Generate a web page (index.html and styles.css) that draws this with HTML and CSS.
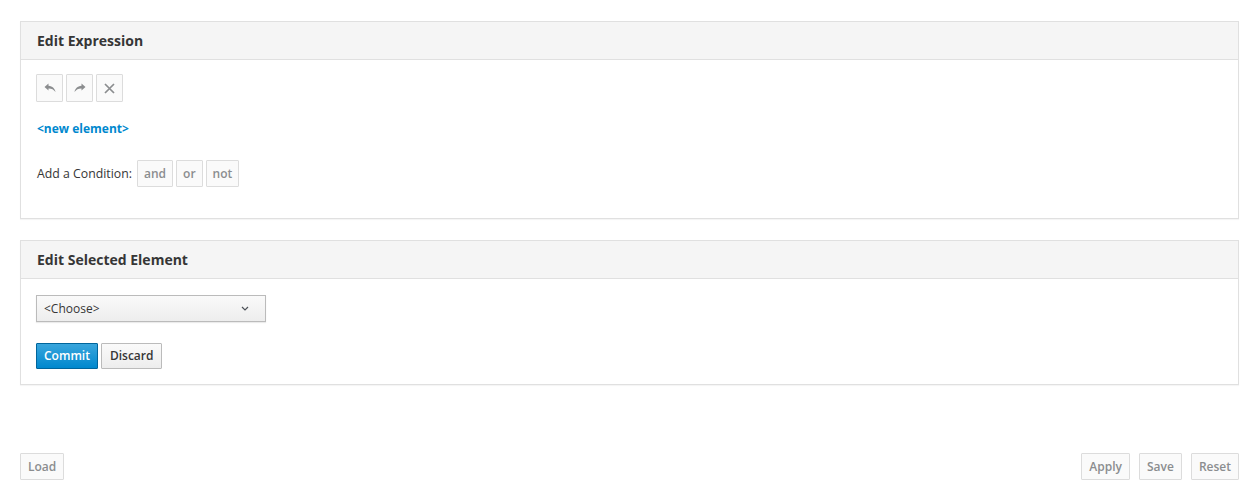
FILE: index.html
```html
<!DOCTYPE html>
<html lang="en">
<head>
    <meta charset="UTF-8">
    <meta name="viewport" content="width=device-width, initial-scale=1.0">
    <title>Edit Expression</title>
    <link rel="stylesheet" href="styles.css">
</head>
<body>
    <div class="page">
        <div class="panel">
            <div class="panel-heading">Edit Expression</div>
            <div class="panel-body expr-body">
                <div class="btn-group">
                    <button class="btn btn-icon" title="Undo">
                        <svg width="12" height="10" viewBox="0 0 12 10"><path d="M4.5 0.5 L0.5 4 L4.5 7.5 V5.4 C7.4 5.3 9.6 6.2 11.5 9 C11 5.6 8.6 3 4.5 2.7 Z" fill="#8b8d8f"/></svg>
                    </button>
                    <button class="btn btn-icon" title="Redo">
                        <svg width="12" height="10" viewBox="0 0 12 10"><path d="M7.5 0.5 L11.5 4 L7.5 7.5 V5.4 C4.6 5.3 2.4 6.2 0.5 9 C1 5.6 3.4 3 7.5 2.7 Z" fill="#8b8d8f"/></svg>
                    </button>
                    <button class="btn btn-icon" title="Clear">
                        <svg width="11" height="11" viewBox="0 0 11 11"><path d="M1 1 L10 10 M10 1 L1 10" stroke="#8b8d8f" stroke-width="1.7"/></svg>
                    </button>
                </div>
                <a class="new-element" href="#">&lt;new element&gt;</a>
                <div class="condition-row">
                    <span class="label">Add a Condition:</span>
                    <button class="btn btn-light btn-cond">and</button>
                    <button class="btn btn-light btn-cond">or</button>
                    <button class="btn btn-light btn-cond">not</button>
                </div>
            </div>
        </div>

        <div class="panel">
            <div class="panel-heading">Edit Selected Element</div>
            <div class="panel-body select-body">
                <div class="select">
                    <span>&lt;Choose&gt;</span>
                    <svg width="8" height="5" viewBox="0 0 8 5"><path d="M1 1 L4 4 L7 1" stroke="#4d5258" stroke-width="1.2" fill="none"/></svg>
                </div>
                <div class="actions">
                    <button class="btn btn-primary">Commit</button>
                    <button class="btn btn-default">Discard</button>
                </div>
            </div>
        </div>

        <div class="footer">
            <button class="btn btn-light btn-footer">Load</button>
            <div class="footer-right">
                <button class="btn btn-light btn-footer">Apply</button>
                <button class="btn btn-light btn-footer">Save</button>
                <button class="btn btn-light btn-footer">Reset</button>
            </div>
        </div>
    </div>
</body>
</html>
```

FILE: styles.css
```css
body {
    font-family: "Open Sans", "Liberation Sans", sans-serif;
    font-size: 12px;
    color: #363636;
    margin: 0;
    background-color: #fff;
}
.page {
    padding: 21px 20px 0 20px;
}
.panel {
    border: 1px solid #e0e0e0;
    margin-bottom: 21px;
    box-shadow: 0 1px 1px rgba(3, 3, 3, 0.04);
}
.panel-heading {
    background-color: #f5f5f5;
    border-bottom: 1px solid #e0e0e0;
    padding: 10px 16px;
    line-height: 17px;
    font-size: 14px;
    font-weight: 700;
    color: #363636;
}
.panel-body {
    padding: 14px 15px;
}
.expr-body {
    height: 130px;
}
.btn {
    font-family: "Open Sans", "Liberation Sans", sans-serif;
    font-size: 12px;
    line-height: 16px;
    padding: 4px 6px;
    border-radius: 1px;
    cursor: pointer;
}
.btn-group {
    display: flex;
    gap: 3px;
}
.btn-icon {
    width: 27px;
    height: 28px;
    display: flex;
    align-items: center;
    justify-content: center;
    padding: 0;
    background-color: #fafafa;
    border: 1px solid #dcdcdc;
}
.new-element {
    display: block;
    margin-top: 19px;
    color: #0088ce;
    font-weight: 700;
    text-decoration: none;
    line-height: 16px;
    padding-left: 1px;
}
.condition-row {
    display: flex;
    align-items: center;
    gap: 3px;
    margin-top: 23px;
}
.label {
    margin-right: 2px;
    padding-left: 1px;
    font-size: 12.3px;
    color: #363636;
}
.btn-light {
    height: 27px;
    background-color: #fafafa;
    border: 1px solid #dcdcdc;
    color: #8b8d8f;
    font-weight: 600;
    padding: 4px 7px;
}
.btn-cond {
    padding: 4px 6px;
}
.select-body {
    padding: 16px 15px 15px;
}
.select {
    width: 230px;
    height: 27px;
    box-sizing: border-box;
    border: 1px solid #bbb;
    background: linear-gradient(to bottom, #fafafa 0%, #ededed 100%);
    box-shadow: 0 1px 1px rgba(3, 3, 3, 0.08);
    display: flex;
    align-items: center;
    justify-content: space-between;
    padding: 0 16px 0 7px;
    color: #363636;
}
.actions {
    display: flex;
    gap: 3px;
    margin-top: 21px;
}
.btn-primary {
    height: 26px;
    background: linear-gradient(to bottom, #39a5dc 0%, #0088ce 100%);
    background-color: #0088ce;
    border: 1px solid #00659c;
    color: #fff;
    font-weight: 600;
    padding: 3px 7px;
}
.btn-default {
    height: 26px;
    background: linear-gradient(to bottom, #fafafa 0%, #ededed 100%);
    border: 1px solid #bbb;
    color: #363636;
    font-weight: 600;
    padding: 3px 8px;
}
.footer {
    display: flex;
    justify-content: space-between;
    margin-top: 68px;
}
.footer-right {
    display: flex;
    gap: 9px;
}
.btn-footer {
    font-weight: 600;
    padding: 4px 7px;
}
```
